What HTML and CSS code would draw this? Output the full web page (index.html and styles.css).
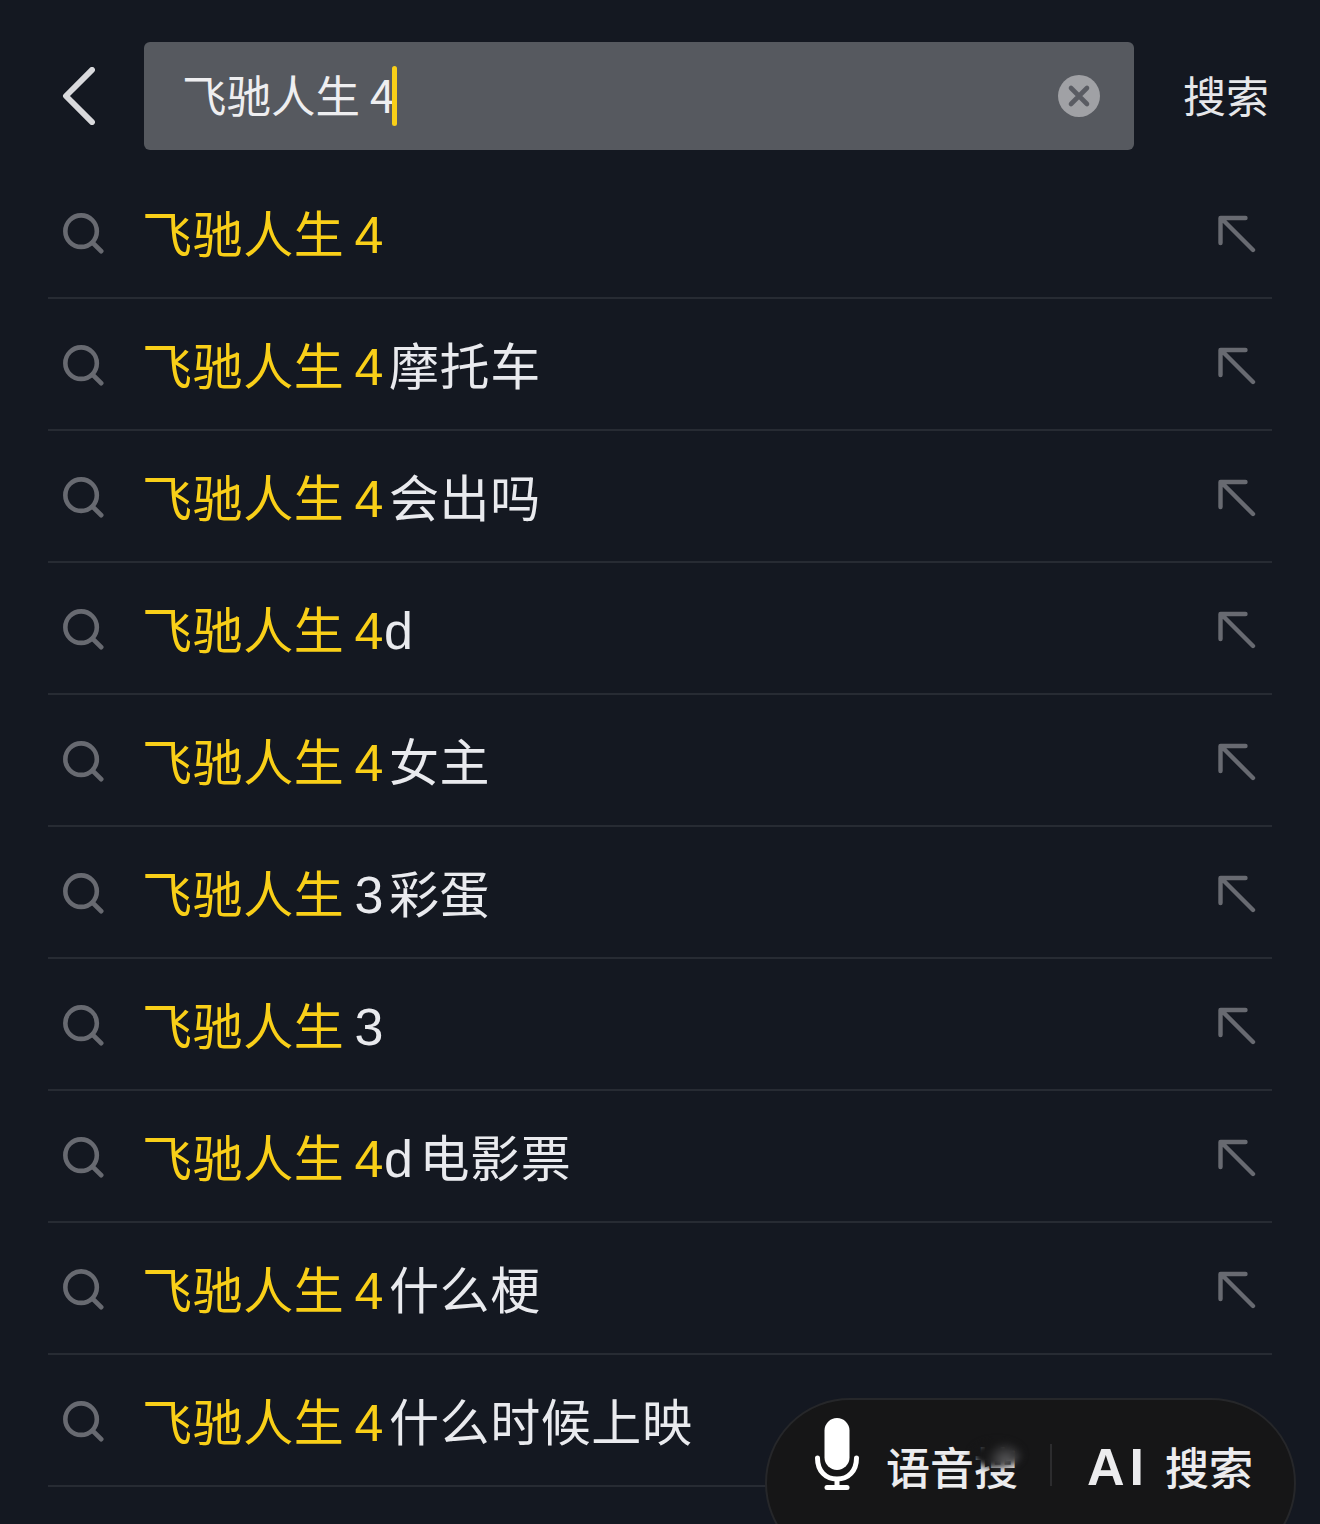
FILE: index.html
```html
<!DOCTYPE html>
<html lang="zh-CN">
<head>
  <meta charset="UTF-8">
  <title>搜索</title>
  <link rel="stylesheet" href="styles.css">
</head>
<body>
  <svg class="icon-defs" width="0" height="0">
    <symbol id="icon-search" viewBox="0 0 44 44">
      <circle cx="20" cy="19" r="16.5" fill="none" stroke="currentColor" stroke-width="4.8"/>
      <path d="M32 31l9 9" fill="none" stroke="currentColor" stroke-width="5" stroke-linecap="round"/>
    </symbol>
    <symbol id="icon-fill" viewBox="0 0 38 38">
      <path d="M2.500 28V3h25M3 3l32 32" fill="none" stroke="currentColor" stroke-width="4.400" stroke-linecap="round" stroke-linejoin="round"/>
    </symbol>
  </svg>

  <header class="search-bar">
    <svg class="back-icon" viewBox="0 0 34 60">
      <path d="M31 3L4 30l27 27" fill="none" stroke="currentColor" stroke-width="6" stroke-linecap="round" stroke-linejoin="round"/>
    </svg>
    <div class="search-field">
      <span class="query">飞驰人生 4</span><span class="caret"></span>
      <svg class="clear-icon" viewBox="0 0 42 42">
        <circle cx="21" cy="21" r="21" fill="#a0a1a5"/>
        <path d="M13 13l16 16M29 13L13 29" fill="none" stroke="#5a5c63" stroke-width="4.6" stroke-linecap="round"/>
      </svg>
    </div>
    <span class="search-btn">搜索</span>
  </header>

  <ul class="suggest-list">
    <li class="suggest-row">
      <svg class="row-search"><use href="#icon-search"/></svg>
      <span class="row-text"><em>飞驰人生</em><em class="num">4</em></span>
      <svg class="row-fill"><use href="#icon-fill"/></svg>
    </li>
    <li class="suggest-row">
      <svg class="row-search"><use href="#icon-search"/></svg>
      <span class="row-text"><em>飞驰人生</em><em class="num">4</em>摩托车</span>
      <svg class="row-fill"><use href="#icon-fill"/></svg>
    </li>
    <li class="suggest-row">
      <svg class="row-search"><use href="#icon-search"/></svg>
      <span class="row-text"><em>飞驰人生</em><em class="num">4</em>会出吗</span>
      <svg class="row-fill"><use href="#icon-fill"/></svg>
    </li>
    <li class="suggest-row">
      <svg class="row-search"><use href="#icon-search"/></svg>
      <span class="row-text"><em>飞驰人生</em><em class="num">4</em><span class="latin">d</span></span>
      <svg class="row-fill"><use href="#icon-fill"/></svg>
    </li>
    <li class="suggest-row">
      <svg class="row-search"><use href="#icon-search"/></svg>
      <span class="row-text"><em>飞驰人生</em><em class="num">4</em>女主</span>
      <svg class="row-fill"><use href="#icon-fill"/></svg>
    </li>
    <li class="suggest-row">
      <svg class="row-search"><use href="#icon-search"/></svg>
      <span class="row-text"><em>飞驰人生</em><span class="num">3</span>彩蛋</span>
      <svg class="row-fill"><use href="#icon-fill"/></svg>
    </li>
    <li class="suggest-row">
      <svg class="row-search"><use href="#icon-search"/></svg>
      <span class="row-text"><em>飞驰人生</em><span class="num">3</span></span>
      <svg class="row-fill"><use href="#icon-fill"/></svg>
    </li>
    <li class="suggest-row">
      <svg class="row-search"><use href="#icon-search"/></svg>
      <span class="row-text"><em>飞驰人生</em><em class="num">4</em><span class="latin">d</span><span class="after-latin">电影票</span></span>
      <svg class="row-fill"><use href="#icon-fill"/></svg>
    </li>
    <li class="suggest-row">
      <svg class="row-search"><use href="#icon-search"/></svg>
      <span class="row-text"><em>飞驰人生</em><em class="num">4</em>什么梗</span>
      <svg class="row-fill"><use href="#icon-fill"/></svg>
    </li>
    <li class="suggest-row">
      <svg class="row-search"><use href="#icon-search"/></svg>
      <span class="row-text"><em>飞驰人生</em><em class="num">4</em>什么时候上映</span>
    </li>
  </ul>

  <div class="voice-pill">
    <svg class="mic-icon" viewBox="0 0 44 72">
      <rect x="9.500" y="0" width="25" height="52" rx="12.500" fill="#fff"/>
      <path d="M2.500 40c0 13 8 21 19.500 21s19.500-8 19.500-21" fill="none" stroke="#fff" stroke-width="5" stroke-linecap="round"/>
      <path d="M22 60v9" stroke="#fff" stroke-width="5"/>
      <rect x="9.500" y="67" width="25" height="5" rx="2.500" fill="#fff"/>
    </svg>
    <span class="pill-label">语音<span class="smudged">搜<span class="smudge"></span></span></span>
    <span class="pill-divider"></span>
    <span class="pill-label"><span class="ai-mark">AI</span>搜索</span>
  </div>
</body>
</html>
```

FILE: styles.css
```css
* {
  box-sizing: border-box;
}

html, body {
  height: 100%;
}

body {
  margin: 0;
  height: 1524px;
  overflow: hidden;
  position: relative;
  background-color: #141821;
  color: #e9eaee;
  font-family: "Noto Sans CJK SC", "Liberation Sans", sans-serif;
}

.icon-defs {
  position: absolute;
}

.search-bar {
  display: flex;
  align-items: center;
  height: 167px;
  padding: 25px 52px 0 62px;
}

.back-icon {
  width: 33px;
  height: 58px;
  color: #d9d9dc;
  margin-right: 49px;
  flex: none;
}

.search-field {
  display: flex;
  align-items: center;
  width: 990px;
  height: 108px;
  padding: 0 34px 0 38px;
  background-color: #56595f;
  border-radius: 6px;
  flex: none;
}

.query {
  font-size: 44.5px;
  line-height: 60px;
  margin-bottom: 4px;
  color: #eeeef0;
  white-space: pre;
}

.caret {
  width: 5px;
  height: 60px;
  margin-left: -3px;
  border-radius: 3px;
  background-color: #f9cf18;
}

.clear-icon {
  width: 42px;
  height: 42px;
  margin-left: auto;
}

.search-btn {
  margin: 0 0 4px 49px;
  font-size: 43px;
  line-height: 60px;
  color: #e6e7ea;
  white-space: nowrap;
}

.suggest-list {
  list-style: none;
  margin: 0 48px;
  padding: 0;
}

.suggest-row {
  display: flex;
  align-items: center;
  height: 132px;
  border-bottom: 2px solid #272b33;
  padding-left: 14px;
}

.row-search {
  width: 42px;
  height: 42px;
  color: #686a71;
  flex: none;
  margin-top: 3px;
}

.row-text {
  margin-left: 38px;
  margin-top: 2px;
  font-size: 50px;
  line-height: 70px;
  letter-spacing: 0.6px;
  color: #e9eaee;
  white-space: nowrap;
}

.row-text em {
  font-style: normal;
  color: #f9cf18;
}

.num {
  font-family: "Liberation Sans", sans-serif;
  font-size: 52px;
  margin: 0 5px 0 10px;
}

.latin {
  font-family: "Liberation Sans", sans-serif;
  font-size: 52px;
  margin-left: -5px;
  margin-right: 7px;
  color: #e9eaee;
}

.after-latin {
  margin-left: -1px;
}

.row-fill {
  width: 38px;
  height: 38px;
  margin-left: auto;
  margin-right: 16px;
  margin-top: 4px;
  color: #686a71;
  flex: none;
}

/* floating pill, runs off the bottom of the page */
.voice-pill {
  position: absolute;
  left: 765px;
  top: 1398px;
  width: 531px;
  height: 170px;
  display: flex;
  align-items: flex-start;
  padding: 18px 0 0 48px;
  background-color: #161617;
  border: 2px solid #26272a;
  border-radius: 85px;
}

.mic-icon {
  width: 44px;
  height: 72px;
  flex: none;
}

.pill-label {
  margin: 17px 0 0 27px;
  font-size: 44px;
  line-height: 62px;
  font-weight: 500;
  color: #ececee;
  white-space: nowrap;
}

.smudged {
  position: relative;
  display: inline-block;
}

.smudge {
  position: absolute;
  left: -2px;
  top: 6px;
  width: 50px;
  height: 27px;
  border-radius: 50%;
  background: radial-gradient(circle at 68% 75%, #5c5c5e 0%, #161617 50%);
  filter: blur(3px);
}

.pill-divider {
  width: 2px;
  height: 42px;
  margin: 26px 0 0 32px;
  background-color: #2c2c2e;
  flex: none;
}

.pill-label:last-child {
  margin-left: 35px;
}

.ai-mark {
  font-family: "Liberation Sans", sans-serif;
  font-size: 52px;
  line-height: 1;
  font-weight: 700;
  letter-spacing: 5px;
  margin-right: 16px;
}
```
